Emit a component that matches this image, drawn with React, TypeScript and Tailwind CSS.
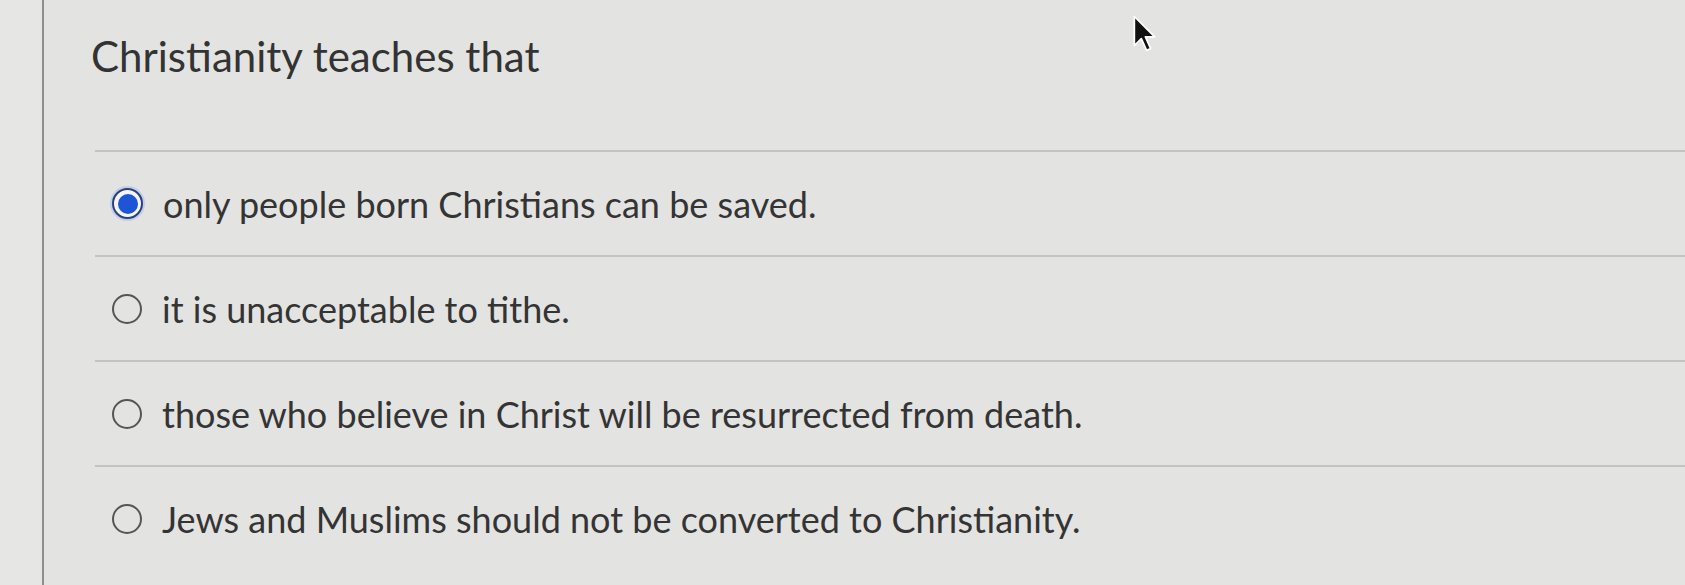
import React from "react";

const options = [
  { text: "only people born Christians can be saved.", selected: true },
  { text: "it is unacceptable to tithe.", selected: false },
  { text: "those who believe in Christ will be resurrected from death.", selected: false },
  { text: "Jews and Muslims should not be converted to Christianity.", selected: false },
];

function Radio({ selected }: { selected: boolean }) {
  if (selected) {
    return (
      <div className="w-[31px] h-[31px] rounded-full border-[2.5px] border-[#2c3f78] bg-[#f4f5f8] flex items-center justify-center shadow-[0_0_0_2px_rgba(180,195,235,0.7)] shrink-0">
        <div className="w-[20px] h-[20px] rounded-full bg-[#1d55d6]" />
      </div>
    );
  }
  return <div className="w-[30px] h-[30px] rounded-full border-[2.5px] border-[#555555] shrink-0" />;
}

export default function App() {
  return (
    <div
      className="relative w-[1685px] h-[585px] overflow-hidden bg-[#e3e3e1] flex"
      style={{ fontFamily: "Lato, 'Noto Sans', sans-serif" }}
    >
      <div className="w-[44px] shrink-0 border-r-2 border-[#8e8e8c] bg-[#e6e6e4]" />
      <div className="flex-1 flex flex-col">
        <div className="pl-[47px] pt-[29px] text-[42px] leading-[55px] text-[#333333]">
          Christianity teaches that
        </div>
        <div className="mt-[66px] ml-[51px] flex flex-col">
          {options.map((o, i) => (
            <div
              key={i}
              className="h-[105px] border-t-2 border-[#c3c3c1] flex items-center pl-[17px] gap-[20px]"
            >
              <Radio selected={o.selected} />
              <span className="text-[36px] text-[#343434]">{o.text}</span>
            </div>
          ))}
        </div>
      </div>
      <svg
        className="absolute left-[1132px] top-[14px]"
        width="28"
        height="40"
        viewBox="0 0 24 34"
      >
        <path
          d="M2 2 L2 27 L8 21 L12.5 31 L16 29.5 L11.5 19.5 L19.5 19.5 Z"
          fill="#111"
          stroke="#fff"
          strokeWidth="1.5"
          strokeLinejoin="round"
        />
      </svg>
    </div>
  );
}
